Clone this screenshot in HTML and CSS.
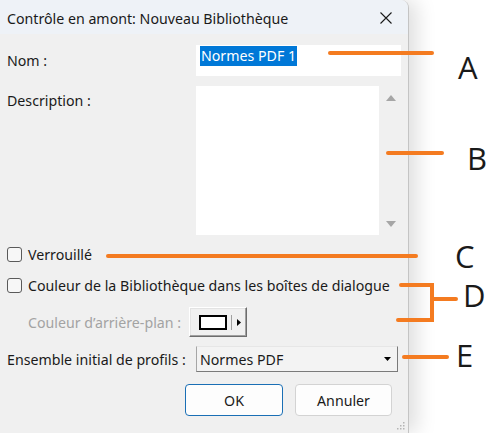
FILE: index.html
```html
<!DOCTYPE html>
<html lang="fr">
<head>
<meta charset="utf-8">
<title>Contrôle en amont</title>
<link rel="stylesheet" href="styles.css">
</head>
<body>
<div class="page">
  <div class="dialog">
    <div class="titlebar">
      <span class="title">Contrôle en amont: Nouveau Bibliothèque</span>
      <svg class="close" width="14" height="14" viewBox="0 0 14 14"><path d="M1.5 1.5 L12.5 12.5 M12.5 1.5 L1.5 12.5" stroke="#1a1a1a" stroke-width="1.1" fill="none"/></svg>
    </div>
    <div class="content">
      <div class="row row-nom">
        <span class="label">Nom :</span>
        <div class="input"><span class="sel">Normes PDF 1</span></div>
      </div>
      <div class="row row-desc">
        <span class="label label-top">Description :</span>
        <div class="textarea"></div>
        <div class="scroll">
          <svg width="10" height="6" viewBox="0 0 10 6"><path d="M0 6 L5 0 L10 6 Z" fill="#a6a6a6"/></svg>
          <svg width="10" height="6" viewBox="0 0 10 6"><path d="M0 0 L5 6 L10 0 Z" fill="#a6a6a6"/></svg>
        </div>
      </div>
      <div class="row row-check row-lock">
        <span class="checkbox"></span>
        <span class="check-text">Verrouillé</span>
      </div>
      <div class="row row-check row-color">
        <span class="checkbox"></span>
        <span class="check-text">Couleur de la Bibliothèque dans les boîtes de dialogue</span>
      </div>
      <div class="row row-bg">
        <span class="label-disabled">Couleur d’arrière-plan :</span>
        <div class="colorbtn">
          <span class="swatch"></span>
          <span class="divider"></span>
          <svg width="4" height="7" viewBox="0 0 4 7"><path d="M0 0 L4 3.5 L0 7 Z" fill="#000"/></svg>
        </div>
      </div>
      <div class="row row-set">
        <span class="label">Ensemble initial de profils :</span>
        <div class="select">
          <span>Normes PDF</span>
          <svg width="7" height="4" viewBox="0 0 7 4"><path d="M0 0 L7 0 L3.5 4 Z" fill="#000"/></svg>
        </div>
      </div>
      <div class="row row-buttons">
        <button class="btn btn-ok">OK</button>
        <button class="btn">Annuler</button>
      </div>
    </div>
    <svg class="grip" width="9" height="9" viewBox="0 0 9 9">
      <g fill="#b4b4b4">
        <rect x="7" y="1" width="1.5" height="1.5"/>
        <rect x="4" y="4" width="1.5" height="1.5"/><rect x="7" y="4" width="1.5" height="1.5"/>
        <rect x="1" y="7" width="1.5" height="1.5"/><rect x="4" y="7" width="1.5" height="1.5"/><rect x="7" y="7" width="1.5" height="1.5"/>
      </g>
    </svg>
  </div>
  <svg class="annotations" width="498" height="433" viewBox="0 0 498 433">
    <g stroke="#f47b20" stroke-width="4" stroke-linecap="round" fill="none">
      <path d="M330 53 H432"/>
      <path d="M388 153 H442"/>
      <path d="M108 256 H416"/>
      <path d="M401 285 H432 V320 H398 M432 299 H456"/>
      <path d="M404 357 H447"/>
    </g>
    <g class="letters" fill="#1a1a1a">
      <text x="458" y="79">A</text>
      <text x="467" y="170">B</text>
      <text x="455" y="268">C</text>
      <text x="463" y="307">D</text>
      <text x="456" y="367">E</text>
    </g>
  </svg>
</div>
</body>
</html>
```
FILE: styles.css
```css
* { box-sizing: border-box; }
html, body { margin: 0; padding: 0; background: #ffffff; }
body {
  font-family: "Noto Sans", "Open Sans", sans-serif;
  font-size: 14.2px;
  color: #1a1a1a;
  width: 498px;
  height: 433px;
  overflow: hidden;
}
.page { position: relative; width: 498px; height: 433px; }
.dialog {
  position: relative;
  width: 409px;
  height: 433px;
  background: #f0f0f0;
  border-right: 1px solid #c4c4c4;
  border-top-right-radius: 8px;
  box-shadow: 8px 0 20px rgba(0, 0, 0, 0.13);
  overflow: hidden;
}
.titlebar {
  height: 34px;
  background: #eef2f7;
  display: flex;
  align-items: center;
  justify-content: space-between;
  padding: 0 15px 0 7px;
}
.title { font-size: 14.2px; padding-top: 2px; }
.close { display: block; margin-top: 1px; }
.content { padding-left: 7px; display: flex; flex-direction: column; }
.row { display: flex; align-items: center; }
.label { width: 189px; flex: none; }
.row-nom { margin-top: 11px; height: 31px; }
.input {
  width: 205px;
  height: 31px;
  background: #ffffff;
  display: flex;
  align-items: flex-start;
  padding: 1px 0 0 4px;
}
.sel { background: #0078d7; color: #ffffff; line-height: 20px; padding: 0 1px; }
.row-desc { margin-top: 10px; height: 149px; align-items: stretch; }
.label-top { padding-top: 5px; }
.textarea { width: 183px; background: #ffffff; }
.scroll {
  width: 20px;
  display: flex;
  flex-direction: column;
  justify-content: space-between;
  align-items: center;
  padding: 9px 0 8px 3px;
}
.scroll svg { display: block; }
.row-check { height: 21px; }
.row-lock { margin-top: 9px; }
.row-color { margin-top: 10px; }
.checkbox {
  width: 15px;
  height: 15px;
  border: 1px solid #5a5a5a;
  border-radius: 3px;
  background: #f7f7f7;
  flex: none;
  margin-right: 6px;
}
.row-bg { margin-top: 11px; height: 30px; padding-left: 21px; }
.label-disabled { width: 161px; flex: none; color: #a3a3a3; }
.colorbtn {
  width: 58px;
  height: 30px;
  background: #f0f0f0;
  border: 1px solid;
  border-color: #ffffff #6d6d6d #6d6d6d #ffffff;
  box-shadow: inset -1px -1px 0 #a0a0a0, inset 1px 1px 0 #e3e3e3;
  display: flex;
  align-items: center;
  padding-left: 9px;
}
.swatch { width: 28px; height: 15px; border: 2px solid #000; background: #fff; }
.divider { width: 1px; height: 15px; background: #a0a0a0; margin: 0 5px 0 4px; }
.colorbtn svg { display: block; }
.row-set { margin-top: 9px; height: 26px; }
.select {
  width: 202px;
  height: 26px;
  background: #f3f3f3;
  border: 1px solid;
  border-color: #e6e6e6 #7a7a7a #7a7a7a #a6a6a6;
  display: flex;
  align-items: center;
  justify-content: space-between;
  padding: 0 6px 0 3px;
}
.select svg { display: block; }
.row-buttons { margin-top: 12px; height: 32px; padding-left: 178px; gap: 12px; }
.btn {
  font-family: inherit;
  font-size: 14.2px;
  color: #1a1a1a;
  height: 32px;
  width: 97px;
  background: #fdfdfd;
  border: 1px solid #d3d3d3;
  border-radius: 4px;
  padding: 0;
}
.btn-ok { width: 98px; border-color: #1a6fb5; }
.grip { position: absolute; right: 3px; bottom: 3px; display: block; }
.annotations { position: absolute; left: 0; top: 0; pointer-events: none; }
.letters text { font-family: "Open Sans", "Noto Sans", sans-serif; font-size: 31px; }
```
